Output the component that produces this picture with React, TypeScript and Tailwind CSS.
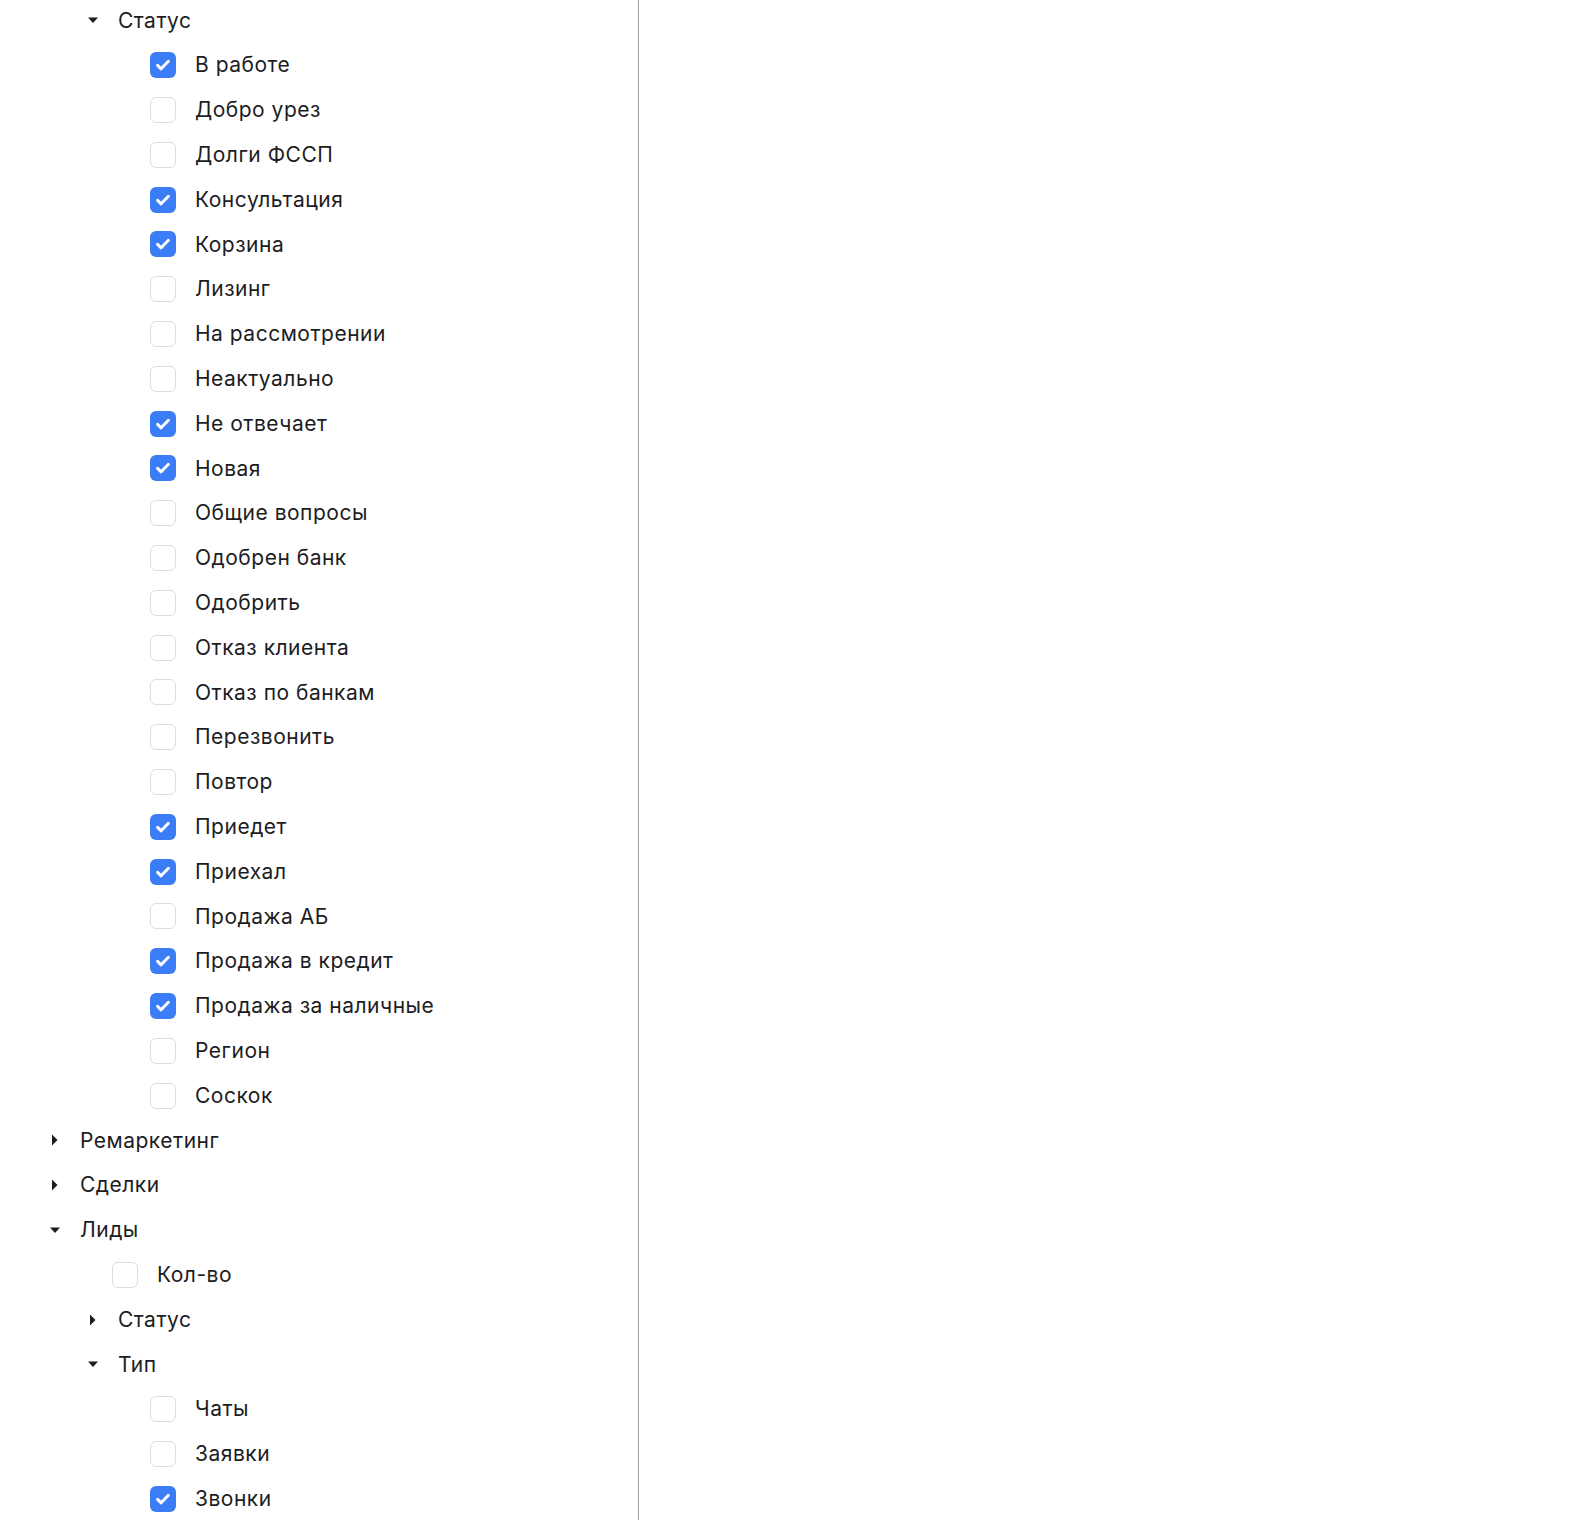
import React from "react";

type Item = { label: string; checked?: boolean };
type Node =
  | { kind: "group"; label: string; open: boolean; level: number }
  | { kind: "check"; label: string; checked: boolean; level: number };

const STATUSES: Item[] = [
  { label: "В работе", checked: true },
  { label: "Добро урез" },
  { label: "Долги ФССП" },
  { label: "Консультация", checked: true },
  { label: "Корзина", checked: true },
  { label: "Лизинг" },
  { label: "На рассмотрении" },
  { label: "Неактуально" },
  { label: "Не отвечает", checked: true },
  { label: "Новая", checked: true },
  { label: "Общие вопросы" },
  { label: "Одобрен банк" },
  { label: "Одобрить" },
  { label: "Отказ клиента" },
  { label: "Отказ по банкам" },
  { label: "Перезвонить" },
  { label: "Повтор" },
  { label: "Приедет", checked: true },
  { label: "Приехал", checked: true },
  { label: "Продажа АБ" },
  { label: "Продажа в кредит", checked: true },
  { label: "Продажа за наличные", checked: true },
  { label: "Регион" },
  { label: "Соскок" },
];

const ROWS: Node[] = [
  { kind: "group", label: "Статус", open: true, level: 1 },
  ...STATUSES.map((s) => ({ kind: "check" as const, label: s.label, checked: !!s.checked, level: 2 })),
  { kind: "group", label: "Ремаркетинг", open: false, level: 0 },
  { kind: "group", label: "Сделки", open: false, level: 0 },
  { kind: "group", label: "Лиды", open: true, level: 0 },
  { kind: "check", label: "Кол-во", checked: false, level: 1 },
  { kind: "group", label: "Статус", open: false, level: 1 },
  { kind: "group", label: "Тип", open: true, level: 1 },
  { kind: "check", label: "Чаты", checked: false, level: 2 },
  { kind: "check", label: "Заявки", checked: false, level: 2 },
  { kind: "check", label: "Звонки", checked: true, level: 2 },
];

// indent per tree level, in px
const GROUP_PAD = ["pl-[49px]", "pl-[87px]", "pl-[125px]"];
const CHECK_PAD = ["pl-[36px]", "pl-[112px]", "pl-[150px]"];

function Caret({ open }: { open: boolean }) {
  return open ? (
    <svg width="12" height="12" viewBox="0 0 12 12" className="shrink-0">
      <path d="M1 3.5h10L6 9z" fill="#1d1d1f" />
    </svg>
  ) : (
    <svg width="12" height="12" viewBox="0 0 12 12" className="shrink-0">
      <path d="M3 0.5v11L8.5 6z" fill="#1d1d1f" />
    </svg>
  );
}

function Box({ checked }: { checked: boolean }) {
  if (checked) {
    return (
      <span className="flex size-[26px] shrink-0 items-center justify-center rounded-[6px] bg-[#3a7df6]">
        <svg width="18" height="18" viewBox="0 0 18 18">
          <path
            d="M3.6 9.4l3.5 3.4L14.4 5.3"
            fill="none"
            stroke="#fff"
            strokeWidth="3"
            strokeLinecap="round"
            strokeLinejoin="round"
          />
        </svg>
      </span>
    );
  }
  return <span className="size-[26px] shrink-0 rounded-[6px] border border-[#dcdcdc] bg-white" />;
}

export default function App() {
  return (
    <div className="flex min-h-[1520px] bg-white font-['Inter','Liberation_Sans',sans-serif] text-[21px] text-[#1d1d1f]">
      <div className="-mt-[2px] w-[639px] shrink-0 border-r-[1.5px] border-[#9ea2a8]">
        {ROWS.map((row, i) =>
          row.kind === "group" ? (
            <div key={i} className={`flex h-[44.8px] items-center ${GROUP_PAD[row.level]}`}>
              <Caret open={row.open} />
              <span className="ml-[19px] tracking-[0.5px]">{row.label}</span>
            </div>
          ) : (
            <div key={i} className={`flex h-[44.8px] items-center ${CHECK_PAD[row.level]}`}>
              <Box checked={row.checked} />
              <span className="ml-[19px] tracking-[0.5px]">{row.label}</span>
            </div>
          )
        )}
      </div>
      <div className="flex-1" />
    </div>
  );
}
